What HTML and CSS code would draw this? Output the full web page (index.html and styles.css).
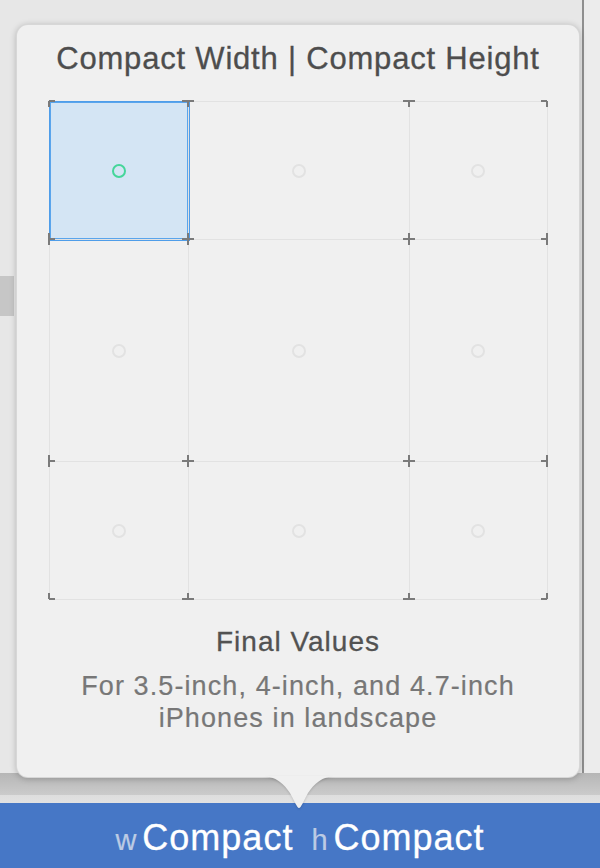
FILE: index.html
```html
<!DOCTYPE html>
<html lang="en">

<head>
  <meta charset="UTF-8">
  <meta name="viewport" content="width=device-width, initial-scale=1.0">
  <title>Size classes - Compact Width | Compact Height</title>

  <link rel="stylesheet" href="styles.css">
</head>

<body>
  <section class="screen">
    <div class="canvas">
      <div class="canvas-main">
        <div class="canvas-label"></div>
      </div>
      <div class="canvas-side"></div>
    </div>
    <div class="canvas-foot"></div>

    <div class="sizebar">
      <span class="size-part"><span class="size-key">w</span>Compact</span>
      <span class="size-part"><span class="size-key">h</span>Compact</span>
    </div>

    <div class="popover">
      <h1 class="popover-title">Compact Width | Compact Height</h1>

      <div class="picker">
        <div class="picker-grid">
          <div class="cell selected"><span class="dot"></span></div>
          <div class="cell"><span class="dot"></span></div>
          <div class="cell"><span class="dot"></span></div>
          <div class="cell"><span class="dot"></span></div>
          <div class="cell"><span class="dot"></span></div>
          <div class="cell"><span class="dot"></span></div>
          <div class="cell"><span class="dot"></span></div>
          <div class="cell"><span class="dot"></span></div>
          <div class="cell"><span class="dot"></span></div>
        </div>

        <!-- tick marks on the grid crossings -->
        <svg class="picker-ticks" width="499" height="499" viewBox="0 0 499 499">
          <g fill="none" stroke="#7a7a7a" stroke-width="2">
            <path d="M0 0H6M0 0V6" />
            <path d="M133 0H145M139 0V6" />
            <path d="M354 0H366M360 0V6" />
            <path d="M498 0H492M498 0V6" />

            <path d="M0 132V144M0 138H6" />
            <path d="M133 138H145M139 132V144" />
            <path d="M354 138H366M360 132V144" />
            <path d="M498 132V144M498 138H492" />

            <path d="M0 354V366M0 360H6" />
            <path d="M133 360H145M139 354V366" />
            <path d="M354 360H366M360 354V366" />
            <path d="M498 354V366M498 360H492" />

            <path d="M0 498H6M0 498V492" />
            <path d="M133 498H145M139 498V492" />
            <path d="M354 498H366M360 498V492" />
            <path d="M498 498H492M498 498V492" />
          </g>
        </svg>
      </div>

      <h2 class="popover-subtitle">Final Values</h2>
      <p class="popover-desc">For 3.5-inch, 4-inch, and 4.7-inch<br>iPhones in landscape</p>

      <svg class="popover-arrow" width="74" height="33" viewBox="0 0 74 33">
        <path d="M0 0C14 0 22 8 28 17C32 24 35 32 37 32C39 32 42 24 46 17C52 8 60 0 74 0Z" fill="#f0f0f0" />
      </svg>
    </div>
  </section>
</body>

</html>
```

FILE: styles.css
```css
* {
  margin: 0;
  padding: 0;
  box-sizing: border-box;
}

body {
  font-family: 'Liberation Sans', Arial, sans-serif;
  background-color: #e8e8e8;
}

.screen {
  position: relative;
  width: 600px;
  height: 868px;
  overflow: hidden;
}

/* storyboard behind the popover */
.canvas {
  display: flex;
  height: 773px;
}

.canvas-main {
  width: 584px;
  background-color: #e7e7e7;
  border-right: 2px solid #8f8f8f;
  padding-top: 276px;
}

.canvas-label {
  width: 14px;
  height: 40px;
  background-color: #c6c6c6;
}

.canvas-side {
  flex: 1;
  background-color: #ececec;
}

.canvas-foot {
  height: 30px;
  background: linear-gradient(#b6b6b6, #cbcbcb 22px, #dedede 22px, #e2e2e2);
}

.sizebar {
  display: flex;
  justify-content: center;
  align-items: baseline;
  gap: 18px;
  height: 65px;
  padding-top: 17px;
  background-color: #4677c6;
  color: #fff;
  font-size: 36px;
  line-height: 36px;
  letter-spacing: 1px;
  -webkit-text-stroke: 0.3px #fff;
}

.size-key {
  margin-right: 5px;
  font-size: 29px;
  color: #bccbe4;
  -webkit-text-stroke: 0.2px #bccbe4;
}

/* popover */
.popover {
  position: absolute;
  left: 16px;
  top: 24px;
  width: 564px;
  height: 754px;
  padding-top: 14px;
  border: 1px solid rgba(0, 0, 0, 0.1);
  border-radius: 12px;
  background-color: #f0f0f0;
  box-shadow: 0 1px 6px rgba(0, 0, 0, 0.22);
  text-align: center;
}

.popover-title {
  font-size: 31px;
  font-weight: normal;
  line-height: 40px;
  letter-spacing: 0.8px;
  color: #4d4d4d;
  -webkit-text-stroke: 0.3px #4d4d4d;
}

.picker {
  position: relative;
  width: 499px;
  height: 499px;
  margin: 22px auto 0;
}

.picker-grid {
  display: grid;
  grid-template-columns: 139px 221px 138px;
  grid-template-rows: 138px 222px 138px;
  border-top: 1px solid #e2e2e2;
  border-left: 1px solid #e2e2e2;
}

.cell {
  display: flex;
  align-items: center;
  justify-content: center;
  border-right: 1px solid #e2e2e2;
  border-bottom: 1px solid #e2e2e2;
}

.cell.selected {
  background-color: #d4e5f4;
  box-shadow: 0 0 0 1px #4f9de9, inset 0 0 0 1px #5aa5ec;
}

.dot {
  width: 14px;
  height: 14px;
  border: 2px solid #e2e2e2;
  border-radius: 50%;
}

.selected .dot {
  border-color: #45d69a;
  border-width: 2.5px;
}

.picker-ticks {
  position: absolute;
  top: 0;
  left: 0;
  overflow: visible;
  pointer-events: none;
}

.popover-subtitle {
  margin-top: 26px;
  font-size: 28px;
  font-weight: normal;
  line-height: 32px;
  letter-spacing: 1px;
  color: #525252;
  -webkit-text-stroke: 0.3px #525252;
}

.popover-desc {
  margin-top: 12px;
  font-size: 27px;
  line-height: 32px;
  letter-spacing: 1.1px;
  color: #777;
  -webkit-text-stroke: 0.2px #777;
}

.popover-arrow {
  position: absolute;
  left: 245px;
  top: 100%;
  margin-top: -1px;
  filter: drop-shadow(0 1px 1px rgba(0, 0, 0, 0.15));
}
```
